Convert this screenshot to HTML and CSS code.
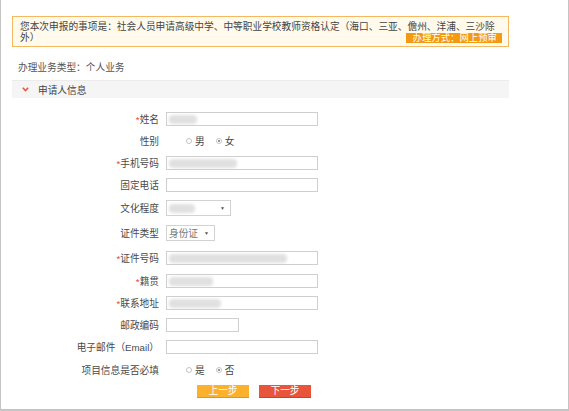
FILE: index.html
```html
<!DOCTYPE html>
<html lang="zh-CN">
<head>
    <meta charset="UTF-8">
    <title>申请人信息</title>
    <link rel="stylesheet" href="styles.css">
</head>
<body>
    <div class="frame">
        <div class="notice">
            <div class="notice-line">您本次申报的事项是：社会人员申请高级中学、中等职业学校教师资格认定（海口、三亚、儋州、洋浦、三沙除</div>
            <div class="notice-line notice-last">
                <span>外）</span>
                <span class="notice-badge">办理方式：网上预审</span>
            </div>
        </div>

        <div class="biz-type">办理业务类型：个人业务</div>

        <div class="section-head">
            <svg class="chevron" width="7" height="5" viewBox="0 0 7 5">
                <path d="M0.8 0.8 L3.5 3.6 L6.2 0.8" fill="none" stroke="#e8553a" stroke-width="1.5"/>
            </svg>
            <span>申请人信息</span>
        </div>

        <div class="form">
            <div class="row">
                <label class="label"><i class="req">*</i>姓名</label>
                <div class="field"><div class="input"><span class="masked" style="width:28px"></span></div></div>
            </div>
            <div class="row">
                <label class="label">性别</label>
                <div class="field radios">
                    <span class="radio"></span><span class="radio-text">男</span>
                    <span class="radio checked"></span><span class="radio-text">女</span>
                </div>
            </div>
            <div class="row">
                <label class="label"><i class="req">*</i>手机号码</label>
                <div class="field"><div class="input"><span class="masked" style="width:68px"></span></div></div>
            </div>
            <div class="row">
                <label class="label">固定电话</label>
                <div class="field"><div class="input"></div></div>
            </div>
            <div class="row row-select">
                <label class="label">文化程度</label>
                <div class="field">
                    <div class="select select-wide"><span class="masked" style="width:26px"></span><span class="arrow">▼</span></div>
                </div>
            </div>
            <div class="row row-select2">
                <label class="label">证件类型</label>
                <div class="field">
                    <div class="select select-narrow"><span class="select-text">身份证</span><span class="arrow">▼</span></div>
                </div>
            </div>
            <div class="row row-tall">
                <label class="label"><i class="req">*</i>证件号码</label>
                <div class="field"><div class="input"><span class="masked" style="width:118px"></span></div></div>
            </div>
            <div class="row">
                <label class="label"><i class="req">*</i>籍贯</label>
                <div class="field"><div class="input"><span class="masked" style="width:44px"></span></div></div>
            </div>
            <div class="row">
                <label class="label"><i class="req">*</i>联系地址</label>
                <div class="field"><div class="input"><span class="masked" style="width:52px"></span></div></div>
            </div>
            <div class="row">
                <label class="label">邮政编码</label>
                <div class="field"><div class="input input-short"></div></div>
            </div>
            <div class="row">
                <label class="label">电子邮件（Email）</label>
                <div class="field"><div class="input"></div></div>
            </div>
            <div class="row row-tall">
                <label class="label">项目信息是否必填</label>
                <div class="field radios">
                    <span class="radio"></span><span class="radio-text">是</span>
                    <span class="radio checked"></span><span class="radio-text">否</span>
                </div>
            </div>
        </div>

        <div class="actions">
            <button class="btn btn-prev">上一步</button>
            <button class="btn btn-next">下一步</button>
        </div>
    </div>
</body>
</html>
```

FILE: styles.css
```css
body {
    margin: 0;
    font-family: "Liberation Sans", "Noto Sans CJK SC", sans-serif;
    font-size: 9.7px;
    color: #444;
    background: #fff;
}
.frame {
    box-sizing: border-box;
    width: 569px;
    height: 411px;
    border: 1px solid #c4c4c4;
    border-top: none;
    border-bottom-width: 2px;
    padding: 16px 59px 0 11px;
}
.notice {
    box-sizing: border-box;
    height: 31px;
    border: 1px solid #f5b861;
    background: #fffaeb;
    padding: 4px 6px 0 7px;
    color: #444;
}
.notice-line {
    line-height: 11px;
    white-space: nowrap;
}
.notice-last {
    display: flex;
    justify-content: space-between;
    align-items: flex-start;
}
.notice-badge {
    height: 10px;
    line-height: 10px;
    margin-top: 1px;
    padding: 0 5px 0 7px;
    font-size: 9.4px;
    background: #f39a12;
    color: #fff;
}
.biz-type {
    margin: 15px 0 0 6px;
    line-height: 11px;
    color: #555;
}
.section-head {
    display: flex;
    align-items: center;
    height: 17px;
    margin-top: 7px;
    background: #f5f5f5;
    border-top: 1px solid #ebebeb;
    color: #444;
}
.chevron {
    margin: 0 9px 0 10px;
}
.form {
    padding-top: 10px;
}
.row {
    display: grid;
    grid-template-columns: 147px 1fr;
    column-gap: 7px;
    align-items: center;
    height: 22px;
}
.row-select {
    height: 24px;
}
.row-select2 {
    height: 26px;
}
.row-tall {
    height: 24px;
}
.label {
    text-align: right;
    color: #4a4a4a;
}
.req {
    font-style: normal;
    color: #e8453a;
}
.field {
    display: flex;
    align-items: center;
}
.input {
    box-sizing: border-box;
    width: 152px;
    height: 14px;
    border: 1px solid #cfcfcf;
    background: #fff;
    display: flex;
    align-items: center;
    padding-left: 2px;
    overflow: hidden;
}
.input-short {
    width: 73px;
}
.masked {
    display: inline-block;
    height: 9px;
    border-radius: 4px;
    background: #e0e0e0;
    filter: blur(1.5px);
}
.select {
    box-sizing: border-box;
    height: 16px;
    border: 1px solid #d2d2d2;
    display: flex;
    align-items: center;
    justify-content: space-between;
    padding: 0 5px 0 2px;
}
.select-wide {
    width: 65px;
}
.select-narrow {
    width: 49px;
}
.select-text {
    color: #777;
}
.arrow {
    font-size: 5px;
    color: #555;
}
.radios {
    padding-left: 20px;
}
.radio {
    box-sizing: border-box;
    width: 6px;
    height: 6px;
    border: 1px solid #c4c4c4;
    border-radius: 50%;
    position: relative;
}
.radio.checked::after {
    content: "";
    position: absolute;
    left: 1px;
    top: 1px;
    width: 2px;
    height: 2px;
    border-radius: 50%;
    background: #777;
}
.radio-text {
    margin: 0 11px 0 3px;
    color: #444;
}
.actions {
    display: flex;
    gap: 10px;
    margin: 3px 0 0 185px;
}
.btn {
    box-sizing: border-box;
    width: 52px;
    height: 13px;
    padding: 0;
    border: none;
    font-family: inherit;
    font-size: 9.7px;
    line-height: 12px;
    color: #fff;
    cursor: pointer;
}
.btn-prev {
    background: #fbb12b;
    border-bottom: 1px solid #e0951c;
}
.btn-next {
    background: #e8553a;
    border-bottom: 1px solid #c9432c;
}
```
